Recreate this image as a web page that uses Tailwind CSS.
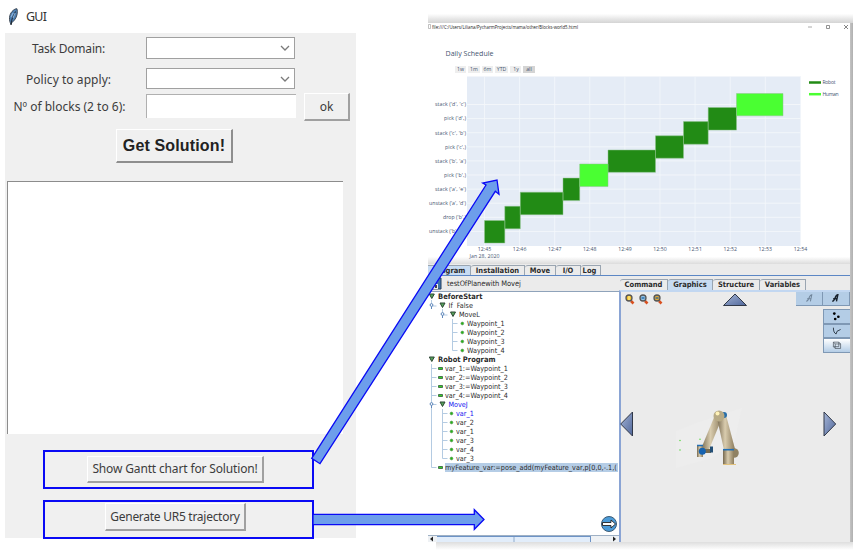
<!DOCTYPE html>
<html lang="en">
<head>
<meta charset="utf-8">
<title>GUI</title>
<script src="https://cdn.jsdelivr.net/npm/@tailwindcss/browser@4"></script>
</head>
<body class="bg-white">
<div class="relative flex h-[550px] w-[853px] overflow-hidden bg-white font-['Noto_Sans','Open_Sans',sans-serif]">

  <!-- Tk window -->
  <section class="ml-[5px] flex w-[351px] flex-col text-[12px] text-[#3c3c3c]">
    <header class="flex h-[33px] items-center gap-[7px] pl-[3px]">
      <svg width="11" height="18" viewBox="0 0 11 18"><path d="M3 16.500C.7 12 1 7 4 3.500 6 1.300 8 .5 9 .8 10 4 9 9 6.500 12L4 14.500Z" fill="#4d7fb3" stroke="#333d49" stroke-width=".9"/><path d="M3 17 4 11 7.500 3.500" fill="none" stroke="#1d2733" stroke-width="1"/><path d="M5 5 3 9M7 5 5 10" stroke="#a9cdf0" stroke-width=".8"/></svg>
      <h1 class="pt-[2px] text-[12.5px] leading-none tracking-[-0.8px] text-[#333]">GUI</h1>
    </header>
    <div class="flex h-[505px] flex-col bg-[#f0f0f0]">
      <div class="flex h-[30px] shrink-0 pt-[4px]">
        <label class="w-[127px] text-center leading-[23px] tracking-[-0.2px]">Task Domain:</label>
        <div class="ml-[14px] flex h-[22px] w-[149px] items-center justify-end border border-[#a0a0a0] bg-white pr-[4px]"><svg width="10" height="6" viewBox="0 0 10 6"><path d="M1 1 5 5 9 1" fill="none" stroke="#7a7a7a" stroke-width="1.3"/></svg></div>
      </div>
      <div class="flex h-[30px] shrink-0 pt-[4px]">
        <label class="w-[127px] text-center leading-[25px] tracking-[0.05px]">Policy to apply:</label>
        <div class="ml-[14px] mt-[1px] flex h-[21px] w-[149px] items-center justify-end border border-[#a0a0a0] bg-white pr-[4px]"><svg width="10" height="6" viewBox="0 0 10 6"><path d="M1 1 5 5 9 1" fill="none" stroke="#7a7a7a" stroke-width="1.3"/></svg></div>
      </div>
      <div class="flex h-[28px] shrink-0">
        <label class="w-[129px] whitespace-nowrap text-center leading-[28px]">Nº of blocks (2 to 6):</label>
        <div class="ml-[12px] mt-[1px] h-[24px] w-[150px] border-l border-t border-[#b0b0b0] bg-white"></div>
        <button class="ml-[8px] flex h-[28px] w-[46px] items-center justify-center border-b-2 border-l border-r-2 border-t border-b-[#a0a0a0] border-l-white border-r-[#a0a0a0] border-t-white leading-none">ok</button>
      </div>
      <button class="ml-[111px] mt-[8px] flex h-[34px] w-[117px] shrink-0 items-center justify-center border-b-2 border-l border-r-2 border-t border-b-[#8e8e8e] border-l-white border-r-[#8e8e8e] border-t-white font-['Liberation_Sans',sans-serif] text-[16px] font-bold leading-none tracking-[0.15px] text-[#222]">Get Solution!</button>
      <div class="ml-[2px] mt-[18px] h-[253px] w-[336px] shrink-0 border-l border-t border-[#8c8c8c] bg-white"></div>
      <div class="ml-[38px] mt-[16px] flex h-[39px] w-[271px] shrink-0 justify-center border-2 border-[#0a0af5] pr-[6px] pt-[4px]">
        <button class="flex h-[27px] w-[177px] items-center justify-center border-b-2 border-l border-r-2 border-t border-b-[#a0a0a0] border-l-white border-r-[#a0a0a0] border-t-white leading-none tracking-[-0.15px]">Show Gantt chart for Solution!</button>
      </div>
      <div class="ml-[38px] mt-[11px] flex h-[39px] w-[271px] shrink-0 justify-center border-2 border-[#0a0af5] pr-[6px] pt-[1px]">
        <button class="flex h-[28px] w-[141px] items-center justify-center border-b-2 border-l border-r-2 border-t border-b-[#a0a0a0] border-l-white border-r-[#a0a0a0] border-t-white leading-none tracking-[-0.27px]">Generate UR5 trajectory</button>
      </div>
    </div>
  </section>

  <section class="ml-[72px] flex w-[425px] flex-col">
    <div class="h-[23px] shrink-0 bg-linear-to-b from-white from-60% to-[#d4d4d4]"></div>

    <!-- Gantt chart window -->
    <div class="flex h-[241px] shrink-0">
      <div class="flex w-[422px] flex-col bg-linear-to-b from-white from-97% to-[#dcdcdc]">
        <svg id="gantt" width="422" height="241" viewBox="428 23 422 241" font-family="'Open Sans','Noto Sans',sans-serif" fill="#44546f">
          <path d="M428.500 24.500h2v4h-2z" fill="none" stroke="#999" stroke-width=".6"/>
          <text x="432" y="28.700" font-size="5.500" fill="#222" textLength="146" lengthAdjust="spacingAndGlyphs">file:///C:/Users/Liliana/PycharmProjects/mama/other/Blocks-world5.html</text>
          <path d="M808 27h4" stroke="#aaa"/><path d="M826.500 25.500h3v3h-3z" fill="none" stroke="#777" stroke-width=".8"/><path d="m844 25 4 4m0-4-4 4" stroke="#777" stroke-width=".9"/>
          <text x="445.500" y="56.300" font-size="7" textLength="48" lengthAdjust="spacingAndGlyphs">Daily Schedule</text>
          <g fill="#eee"><path d="M455 66h11v7h-11zM468 66h12v7h-12zM482 66h11v7h-11zM495 66h13v7h-13zM510 66h11v7h-11z"/><path d="M523 66h12v7h-12z" fill="#d4d4d4"/></g>
          <g font-size="5.200" text-anchor="middle"><text x="460.500" y="71.300">1w</text><text x="474" y="71.300">1m</text><text x="487.500" y="71.300">6m</text><text x="501.500" y="71.300">YTD</text><text x="516" y="71.300">1y</text><text x="529" y="71.300">all</text></g>
          <path d="M467 76.500h334V246H467z" fill="#e5ecf6"/>
          <path d="M484.500 76.500V246M519.600 76.500V246M554.700 76.500V246M589.800 76.500V246M624.900 76.500V246M660 76.500V246M695.100 76.500V246M730.200 76.500V246M765.300 76.500V246M800.500 76.500V246" stroke="#f4f7fb" stroke-width=".8"/>
          <path d="M467 104.500h334M467 118.600h334M467 132.700h334M467 146.800h334M467 160.900h334M467 175h334M467 189.100h334M467 203.200h334M467 217.300h334M467 231.400h334" stroke="#f4f7fb" stroke-width=".9"/>
          <g fill="#228b15" stroke="#8fc38c" stroke-width=".5"><path d="M484.500 220.500h20.300V243h-20.300zM504.800 206.300h15.500v22.500h-15.500zM520.300 192.200h42.700v22.500h-42.700zM563 178.100h16.700v22.500H563zM608 150h47.500v22.300H608zM655.500 135.800h28v22.400h-28zM683.500 121.600h24.700v22.600h-24.700zM708.200 107.500h28.300v22.600h-28.300z"/><path d="M579.700 164h28.300v22.500h-28.300zM736.500 93.500H783v22.300h-46.500z" fill="#4aff32"/></g>
          <g font-size="5.200" text-anchor="end"><text x="466" y="106.300" textLength="31">stack ('d', 'c')</text><text x="466" y="120.400" textLength="22">pick ('d',)</text><text x="466" y="134.500" textLength="31">stack ('c', 'b')</text><text x="466" y="148.600" textLength="21">pick ('c',)</text><text x="466" y="162.700" textLength="31">stack ('b', 'a')</text><text x="466" y="176.800" textLength="22">pick ('b',)</text><text x="466" y="190.900" textLength="31">stack ('a', 'e')</text><text x="466" y="205" textLength="37">unstack ('a', 'd')</text><text x="466" y="219.100" textLength="23">drop ('b',)</text><text x="466" y="233.200" textLength="37">unstack ('b', 'e')</text></g>
          <g font-size="5.200" text-anchor="middle"><text x="484.500" y="251.200" textLength="13.500">12:45</text><text x="519.600" y="251.200" textLength="13.500">12:46</text><text x="554.700" y="251.200" textLength="13.500">12:47</text><text x="589.800" y="251.200" textLength="13.500">12:48</text><text x="624.900" y="251.200" textLength="13.500">12:49</text><text x="660" y="251.200" textLength="13.500">12:50</text><text x="695.100" y="251.200" textLength="13.500">12:51</text><text x="730.200" y="251.200" textLength="13.500">12:52</text><text x="765.300" y="251.200" textLength="13.500">12:53</text><text x="800.500" y="251.200" textLength="13.500">12:54</text></g>
          <text x="469.500" y="257.700" font-size="5.200" textLength="30">Jan 28, 2020</text>
          <path d="M809 82.500h12" stroke="#228b15" stroke-width="2.500"/><path d="M809 94.200h12" stroke="#4aff32" stroke-width="2.500"/>
          <text x="822.500" y="84.400" font-size="5" textLength="13">Robot</text><text x="822.500" y="96.100" font-size="5" textLength="16">Human</text>
        </svg>
      </div>
      <div class="w-[3px] bg-linear-to-r from-[#c4c4c4] to-[#b0b0b0]"></div>
    </div>

    <!-- Robot programming window -->
    <div class="flex h-[278px] shrink-0 font-['DejaVu_Sans_Condensed','DejaVu_Sans',sans-serif] text-[7.5px] leading-none text-[#2b2b2b] [font-stretch:condensed]">
      <div class="flex w-[422px] flex-col bg-[#ebebeb]">
        <nav class="flex h-[12px] shrink-0 border-b border-[#5c87c5] pt-[1px] font-bold *:flex *:items-center *:justify-center *:border-r *:border-t *:border-[#9aa5b1]">
          <span class="w-[43px] rounded-tr-[2px] bg-[#c8dcf2]">Program</span><span class="w-[54px] rounded-tl-[3px]">Installation</span><span class="w-[31px] rounded-tl-[3px]">Move</span><span class="w-[25px] rounded-tl-[3px]">I/O</span><span class="w-[20px] rounded-tl-[3px] pr-[2px]">Log</span>
        </nav>
        <div class="flex h-[266px]">
          <div class="flex w-[191px] flex-col">
            <div class="flex h-[16px] shrink-0 items-center border-b border-[#8fa3ba]">
              <svg width="14" height="13" viewBox="0 0 14 13"><path d="M1 1h12v11H1z" fill="#3f73ab" stroke="#27405e"/><path d="M4 1h6v4H4z" fill="#dfe8f2"/><path d="M4 7h6v5H4z" fill="#eee"/><path d="M7 8h2v3H7z" fill="#444"/></svg>
              <span class="ml-[5px] tracking-[-0.08px]">testOfPlanewith Movej</span>
            </div>
            <div class="relative h-[243px] shrink-0 overflow-hidden bg-white text-[7.2px]">
              <svg class="absolute left-0 top-0" width="190" height="190" viewBox="428 292 190 190" fill="none" stroke="#b4cbe2" stroke-width="1">
                <path d="M431.500 300v6h5M442.500 309v6h5M452.500 319v31.500h5M452.500 323.500h5M452.500 332.500h5M452.500 341.500h5M431.500 364v103.500h5M431.500 368.500h5M431.500 377.500h5M431.500 386.500h5M431.500 395.500h5M431.500 404.500h5M442.500 409v49.500h5M442.500 413.500h5M442.500 422.500h5M442.500 431.500h5M442.500 440.500h5M442.500 449.500h5"/>
                <g stroke="#5d86ba" fill="#fff"><circle cx="431.500" cy="305" r="1.400"/><circle cx="442.500" cy="314" r="1.400"/><circle cx="431.500" cy="404" r="1.400"/><path d="M431.500 306.500v2.500M442.500 315.500v2.500M431.500 405.500v2.500"/></g>
                <g stroke="#2d4634" fill="#56a45b"><path d="M429.300 294h5l-2.500 4.500zM440 303h5l-2.500 4.500zM450.500 312h5l-2.500 4.500zM429.300 357h5l-2.500 4.500zM440 402h5l-2.500 4.500z"/></g>
                <g stroke="#6f9b68" stroke-width=".7" fill="#22b514"><circle cx="462.300" cy="323.500" r="1.400"/><circle cx="462.300" cy="332.500" r="1.400"/><circle cx="462.300" cy="341.500" r="1.400"/><circle cx="462.300" cy="350.500" r="1.400"/><circle cx="451.500" cy="413.500" r="1.400"/><circle cx="451.500" cy="422.500" r="1.400"/><circle cx="451.500" cy="431.500" r="1.400"/><circle cx="451.500" cy="440.500" r="1.400"/><circle cx="451.500" cy="449.500" r="1.400"/><circle cx="451.500" cy="458.500" r="1.400"/></g>
                <path d="M438.500 367.500h4v2h-4zM438.500 376.500h4v2h-4zM438.500 385.500h4v2h-4zM438.500 394.500h4v2h-4zM438.500 466.500h4v2h-4z" fill="#35d321" stroke="#31583a" stroke-width=".8"/>
              </svg>
              <ul class="relative *:flex *:h-[9px] *:items-center *:whitespace-nowrap">
                <li class="pl-[10px] text-[7.5px] font-bold">BeforeStart</li>
                <li class="pl-[20.5px]">If&nbsp; False</li>
                <li class="pl-[31px]">MoveL</li>
                <li class="pl-[39px]">Waypoint_1</li>
                <li class="pl-[39px]">Waypoint_2</li>
                <li class="pl-[39px]">Waypoint_3</li>
                <li class="pl-[39px]">Waypoint_4</li>
                <li class="pl-[10px] text-[7.5px] font-bold">Robot Program</li>
                <li class="pl-[17px]">var_1:=Waypoint_1</li>
                <li class="pl-[17px]">var_2:=Waypoint_2</li>
                <li class="pl-[17px]">var_3:=Waypoint_3</li>
                <li class="pl-[17px]">var_4:=Waypoint_4</li>
                <li class="pl-[20.5px] text-[#1616f0]">MoveJ</li>
                <li class="pl-[28px] text-[#1616f0]">var_1</li>
                <li class="pl-[28px]">var_2</li>
                <li class="pl-[28px]">var_1</li>
                <li class="pl-[28px]">var_3</li>
                <li class="pl-[28px]">var_4</li>
                <li class="pl-[28px]">var_3</li>
                <li class="ml-[17px] w-[173px] bg-[#b5cde6] tracking-[0.01px]">myFeature_var:=pose_add(myFeature_var,p[0,0,-.1,(</li>
              </ul>
              <svg class="absolute bottom-[2px] right-[1px]" width="18" height="18" viewBox="0 0 18 18"><circle cx="9" cy="9" r="7.500" fill="#4b9bd8" stroke="#3c5b75"/><path d="M2.500 7.500H11V5l4.500 4L11 13v-2.500H2.500z" fill="#fff" stroke="#222" stroke-width=".9"/></svg>
            </div>
            <div class="flex h-[7px] items-center justify-between border-t border-[#9fb1c5] bg-[#eef1f4]">
              <svg width="9" height="6" viewBox="0 0 9 6"><path d="M2 3 5 .5v5z" fill="#222"/></svg>
              <div class="mr-[19px] flex h-[6px] w-[154px] justify-center border-r border-t border-[#6d93c6] bg-[#e2edfa]"><span class="h-[5px] w-[2px] bg-[#b9cce2]"></span></div>
              <svg width="9" height="6" viewBox="0 0 9 6"><path d="M6 3 3 .5v5z" fill="#222"/></svg>
            </div>
          </div>
          <div class="flex w-[231px] flex-col">
            <nav class="mt-[3px] flex h-[11px] shrink-0 pl-[1px] font-bold *:flex *:items-center *:justify-center *:border-r *:border-t *:border-[#9aa5b1]">
              <span class="w-[48px] rounded-tl-[3px]">Command</span><span class="w-[45px] rounded-tl-[3px] bg-[#c8dcf2]">Graphics</span><span class="w-[47px] rounded-tl-[3px]">Structure</span><span class="w-[46px] rounded-tl-[3px]">Variables</span>
            </nav>
            <div class="flex h-[252px] flex-col border-l-2 border-t-2 border-l-[#8aa4d4] border-t-[#c2d7f1]">
              <div class="flex h-[61px]">
                <svg width="50" height="16" viewBox="621 291 50 16"><g stroke-width="1.300"><path d="m631 300 2.500 2.500M645 300l2.500 2.500M659 300l2.500 2.500" stroke="#d9501f" stroke-width="2.600"/><g stroke="#555"><circle cx="629" cy="297" r="3" fill="#f3be2d"/><circle cx="643" cy="297" r="3" fill="#91c1e8"/><circle cx="657" cy="297" r="3" fill="#dfa83b"/></g><path d="M629 295v4" stroke="#fff08b"/><path d="M641.500 297h3" stroke="#1f659e"/><path d="M655.500 297h3" stroke="#1f659e"/></g></svg>
                <svg class="ml-[51px]" width="26" height="15" viewBox="0 0 26 15"><defs><linearGradient id="steel" x1="0" y1="0" x2="1" y2="1"><stop stop-color="#a5b5d6"/><stop offset="1" stop-color="#50679b"/></linearGradient></defs><path d="M1.500 13.500 13 2l11.500 11.500z" fill="url(#steel)" stroke="#303848"/></svg>
                <div class="ml-auto flex flex-col items-end gap-[3px]">
                  <div class="flex *:h-[14px] *:w-[27px] *:border-b *:border-r *:border-[#7f98b4] *:bg-[#b4cde6]">
                    <svg viewBox="0 0 27 14"><path d="M10.500 10c1.500 0 2.200-1.300 3-3.500s1.700-3.500 3-3.500l-1.500 7M11.500 7.300h4" fill="none" stroke="#70859b" stroke-width="1.100"/></svg>
                    <svg viewBox="0 0 27 14"><path d="M9.500 10c1.500 0 2.200-1.300 3-3.500s1.700-3.500 3-3.500L14 10M10.500 7.300h4" fill="none" stroke="#16202b" stroke-width="1.500"/></svg>
                  </div>
                  <div class="flex flex-col *:h-[14.6px] *:w-[27px] *:border *:border-r-0 *:border-[#7f98b4] *:bg-[#b4cde6]">
                    <svg viewBox="0 0 27 14"><circle cx="10.500" cy="4" r="1.500"/><circle cx="15" cy="7.500" r="1.500"/><circle cx="11.500" cy="10" r="1.500"/></svg>
                    <svg viewBox="0 0 27 14"><path d="M9.500 3c0 4 1 6 3 7l1-3 4-2" fill="none" stroke="#27323e"/></svg>
                    <svg class="bg-linear-to-b from-white to-[#b4cde6]" viewBox="0 0 27 14"><path d="M9.500 3.500h6v5h-6zM11.500 5.500h6v5h-6zM9.500 3.500l2 2M15.500 3.500l2 2M9.500 8.500l2 2" fill="none" stroke="#4b5560" stroke-width=".8"/></svg>
                  </div>
                </div>
              </div>
              <div class="mt-[52px] flex">
                <svg class="-ml-[1px] mt-[4px]" width="14" height="30" viewBox="0 0 14 30"><path d="M12.500 3v24L.7 15z" fill="url(#steel)" stroke="#303848"/></svg>
                <svg class="ml-[37px]" width="92" height="66" viewBox="670 404 92 66"><defs><linearGradient id="limb" x1="0" x2="1"><stop stop-color="#77694f"/><stop offset=".45" stop-color="#d9ccae"/><stop offset="1" stop-color="#8b7b5c"/></linearGradient></defs>
                  <path d="m675 467 0-37 20-8 46-15-8 35-22 15z" fill="#ededed"/>
                  <path d="m714 414 7 3-14 34-7-3z" fill="url(#limb)"/><path d="m716 417 9-3 9 34-11 1z" fill="url(#limb)"/>
                  <path d="M696 444h6v12h-6z" fill="url(#limb)"/><path d="M696 444.500h6" stroke="#216eb5" stroke-width="1.500"/>
                  <circle cx="723" cy="414" r="3" fill="#286fa9"/><circle cx="718" cy="415" r="5.500" fill="#b7aa85"/><circle cx="716.500" cy="412.500" r="2" fill="#fff2b7"/>
                  <circle cx="733" cy="452" r="4.800" fill="#8f8163"/><path d="M722 449h11v15h-11z" fill="url(#limb)"/><path d="M722 448.700h11" stroke="#216eb5" stroke-width="1.600"/><path d="M722 463.500h13" stroke="#e2c27c"/>
                  <path d="M704 450h6" stroke="#776b50" stroke-width="4"/><path d="M710.500 445.500v6" stroke="#234f76" stroke-width="3"/><circle cx="701.300" cy="450.300" r="3.500" fill="#1763b0"/>
                  <g fill="#65d850"><circle cx="679" cy="439.500" r=".8"/><circle cx="679" cy="449" r=".8"/><circle cx="699" cy="438.300" r=".8"/></g>
                </svg>
                <svg class="ml-auto mr-[13px] mt-[4px]" width="14" height="30" viewBox="0 0 14 30"><path d="M1 3v24l11.700-12z" fill="url(#steel)" stroke="#303848"/></svg>
              </div>
            </div>
          </div>
        </div>
      </div>
      <div class="w-[3px] bg-linear-to-r from-[#c4c4c4] to-[#b0b0b0]"></div>
    </div>
    <div class="ml-[8px] h-[8px] bg-linear-to-b from-[#dedede] to-white"></div>
  </section>

  <!-- Callout arrows laid over both windows -->
  <svg class="absolute left-0 top-0" width="853" height="550" viewBox="0 0 853 550" fill="#6d9eeb" stroke="#0a0af5" stroke-width="1.300">
    <path d="M311.700 458.300 486 185l-3.300-2L497 180l2 14.300-3.700-3L320 463.700z"/>
    <path d="M313 514.300h161.300v-4.600l9.700 9.800-9.700 9.800v-4.700H313z"/>
  </svg>
</div>
</body>
</html>
